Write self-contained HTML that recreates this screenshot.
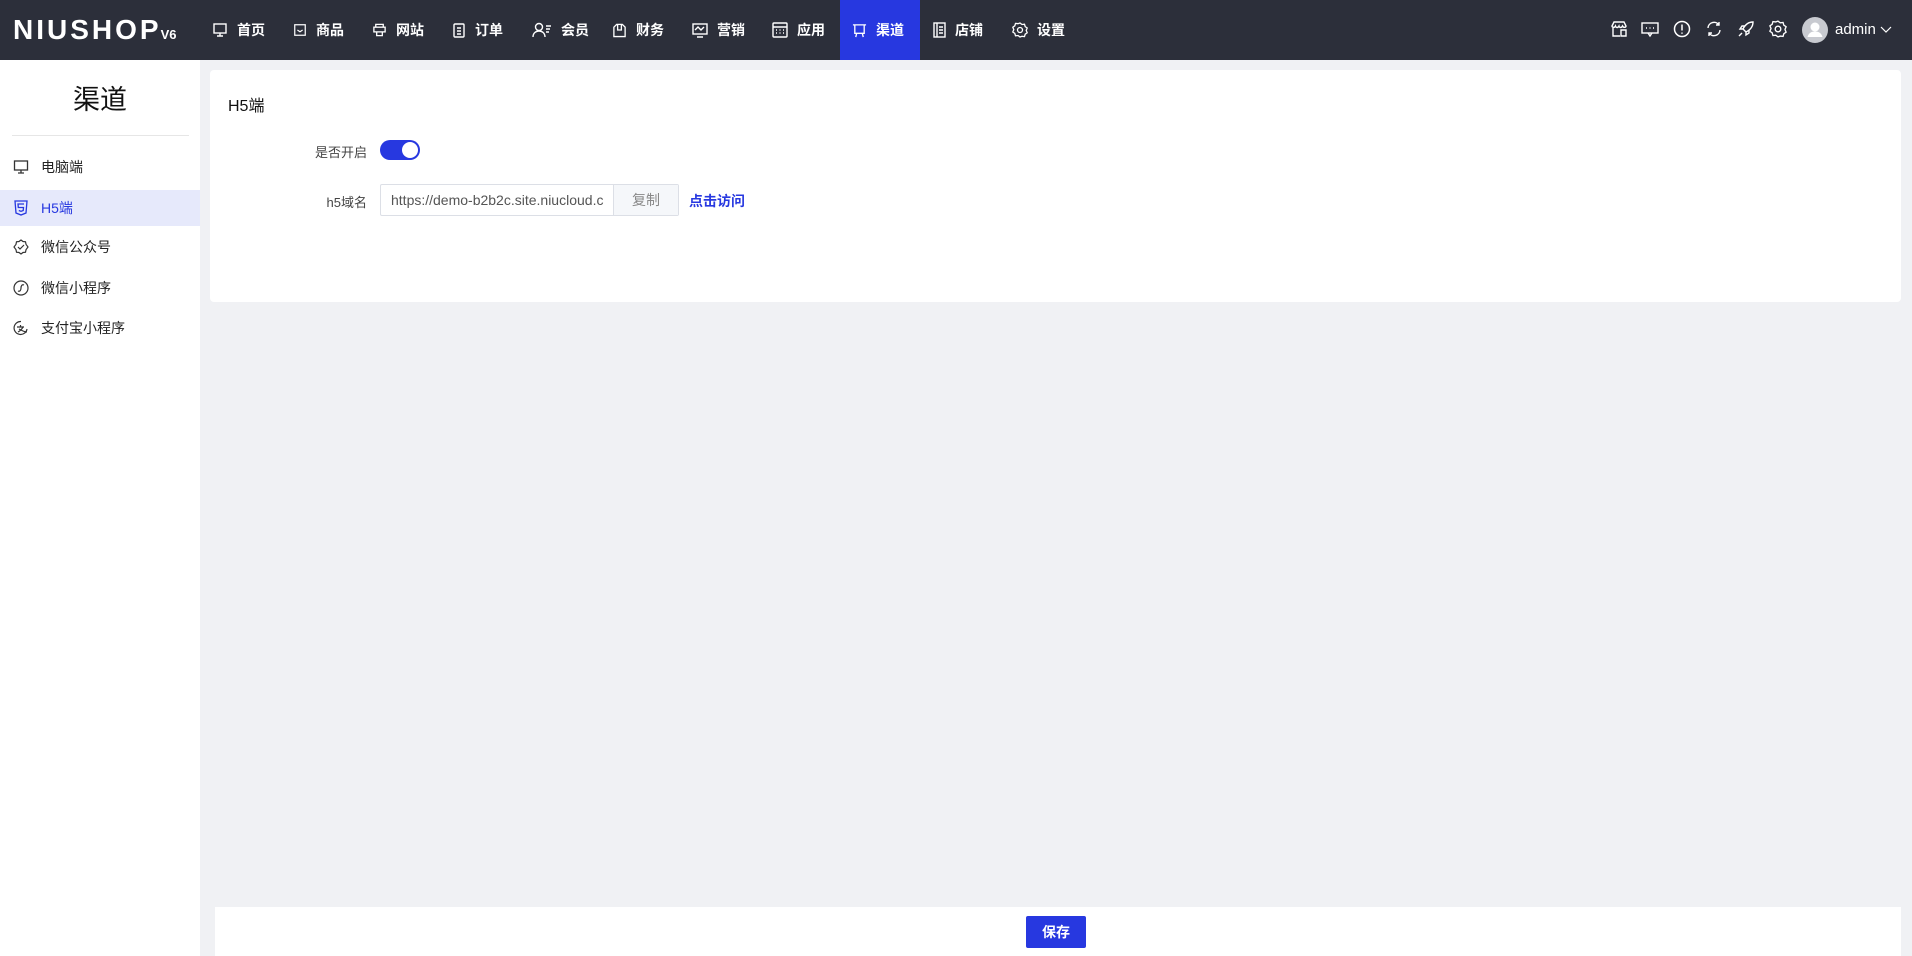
<!DOCTYPE html>
<html><head><meta charset="utf-8"><style>
*{margin:0;padding:0;box-sizing:border-box}
body{width:1912px;height:956px;overflow:hidden;background:#f0f1f4;font-family:"Liberation Sans","Noto Sans CJK SC",sans-serif;position:relative}
.hd{position:absolute;left:0;top:0;width:1912px;height:60px;background:#2c2f3a;color:#fff}
.logo{position:absolute;left:13px;top:14px;font-size:28px;font-weight:bold;letter-spacing:3px;font-family:"Liberation Sans",sans-serif}
.logo small{font-size:13px;letter-spacing:0;margin-left:-1px}
.nav{position:absolute;top:0;height:60px;display:flex;align-items:center;font-size:14px;font-weight:bold}
.nav svg{margin-right:9px}
.act{position:absolute;left:840px;top:0;width:80px;height:60px;background:#2738e0}
.ri{position:absolute;top:20px}
.side{position:absolute;left:0;top:60px;width:200px;height:896px;background:#fff}
.side h1{position:absolute;left:0;width:200px;top:18px;text-align:center;font-size:27px;font-weight:normal;color:#111}
.side .dv{position:absolute;left:12px;top:75px;width:177px;height:1px;background:#e6e6e6}
.it{position:absolute;left:0;width:200px;height:36px;display:flex;align-items:center;font-size:14px;color:#222}
.it svg{margin:0 12px 0 13px}
.it.on{background:#e6e9fb;color:#2738e0}
.card{position:absolute;left:210px;top:70px;width:1691px;height:232px;background:#fff;border-radius:4px}
.lbl{position:absolute;font-size:13px;color:#444;text-align:right;width:120px}
.bar{position:absolute;left:215px;top:907px;width:1686px;height:49px;background:#fff}
.btn{position:absolute;left:1026px;top:916px;width:60px;height:32px;background:#2738e0;color:#fff;border-radius:2px;font-size:14px;font-weight:bold;text-align:center;line-height:32px}
</style></head><body>
<div class="hd">
<div class="logo">NIUSHOP<small>V6</small></div>
<div class="act"></div>
<div class="nav" style="left:212px"><svg width="16" height="16" viewBox="0 0 16 16" fill="none" stroke="#fff" stroke-width="1.4"><rect x="2" y="2" width="12" height="9"/><path d="M8 11v3M5 14h6"/></svg>首页</div>
<div class="nav" style="left:293px"><svg width="14" height="14" viewBox="0 0 16 16" fill="none" stroke="#fff" stroke-width="1.4"><rect x="2" y="2" width="12" height="12"/><path d="M5 8l3 2 3-2"/></svg>商品</div>
<div class="nav" style="left:372px"><svg width="15" height="16" viewBox="0 0 16 16" fill="none" stroke="#fff" stroke-width="1.4"><rect x="2" y="5" width="12" height="5"/><path d="M4 5V2h8v3M5 10v4h6v-4"/></svg>网站</div>
<div class="nav" style="left:452px"><svg width="14" height="16" viewBox="0 0 14 16" fill="none" stroke="#fff" stroke-width="1.4"><rect x="2" y="2" width="10" height="13" rx="1"/><path d="M5 6h4M5 9h4M5 12h4"/></svg>订单</div>
<div class="nav" style="left:532px"><svg width="20" height="16" viewBox="0 0 20 16" fill="none" stroke="#fff" stroke-width="1.4"><circle cx="7" cy="5" r="3.5"/><path d="M1 15c0-4 3-6 6-6s6 2 6 6M14 4h5M14 7h4M14 10h3"/></svg>会员</div>
<div class="nav" style="left:612px"><svg width="15" height="16" viewBox="0 0 16 16" fill="none" stroke="#fff" stroke-width="1.4"><path d="M2 5l3-3h6l3 3v10H2z"/><path d="M6 2v6h4V2"/></svg>财务</div>
<div class="nav" style="left:692px"><svg width="16" height="16" viewBox="0 0 16 16" fill="none" stroke="#fff" stroke-width="1.4"><rect x="1" y="2" width="14" height="10"/><path d="M3 8l3-3 3 3 3-3M5 15h6"/></svg>营销</div>
<div class="nav" style="left:772px"><svg width="16" height="16" viewBox="0 0 16 16" fill="none" stroke="#fff" stroke-width="1.4"><rect x="1" y="1" width="14" height="14" rx="1"/><path d="M1 5h14M4 8h1M7.5 8h1M11 8h1M4 11h1M7.5 11h1M11 11h1"/></svg>应用</div>
<div class="nav" style="left:852px"><svg width="15" height="15" viewBox="0 0 16 16" fill="none" stroke="#fff" stroke-width="1.4"><path d="M1 2h14M3 2v9h10V2M5 11l-1 4M11 11l1 4"/></svg>渠道</div>
<div class="nav" style="left:933px"><svg width="13" height="16" viewBox="0 0 13 16" fill="none" stroke="#fff" stroke-width="1.4"><rect x="1" y="1" width="11" height="14"/><path d="M4 1v14M6 5h4M6 8h4M6 11h4"/></svg>店铺</div>
<div class="nav" style="left:1012px"><svg width="16" height="16" viewBox="0 0 16 16" fill="none" stroke="#fff" stroke-width="1.3"><circle cx="8" cy="8" r="2.5"/><path d="M8 1l2 1.5 2.5-.3.7 2.4 2 1.4-1 2.4 1 2.4-2 1.4-.7 2.4-2.5-.3L8 15l-2-1.5-2.5.3-.7-2.4-2-1.4 1-2.4-1-2.4 2-1.4.7-2.4 2.5.3z"/></svg>设置</div>
<svg class="ri" style="left:1610px" width="18" height="18" viewBox="0 0 18 18" fill="none" stroke="#fff" stroke-width="1.4"><path d="M2 6l2-4h10l2 4v0c0 1.5-2.5 2-3.5 0-1 2-3 2-3.5 0-1 2-3 2-3.5 0C4.5 8 2 7.5 2 6zM3 8v8h7M11 10h5v6h-5z"/></svg>
<svg class="ri" style="left:1641px" width="18" height="18" viewBox="0 0 18 18" fill="none" stroke="#fff" stroke-width="1.4"><rect x="1" y="3" width="16" height="10"/><path d="M7 13l2 3 2-3M5 8h1M8.5 8h1M12 8h1"/></svg>
<svg class="ri" style="left:1673px" width="18" height="18" viewBox="0 0 18 18" fill="none" stroke="#fff" stroke-width="1.5"><circle cx="9" cy="9" r="7.5"/><path d="M9 4.5v6M9 12.5v1.3"/></svg>
<svg class="ri" style="left:1705px" width="18" height="18" viewBox="0 0 18 18" fill="none" stroke="#fff" stroke-width="1.4"><path d="M3 8a6 6 0 0 1 11-3M15 10a6 6 0 0 1-11 3M14 2v3h-3M4 16v-3h3"/></svg>
<svg class="ri" style="left:1737px" width="18" height="18" viewBox="0 0 18 18" fill="none" stroke="#fff" stroke-width="1.4"><path d="M16 2c-5 0-8 3-10 7l3 3c4-2 7-5 7-10zM6 9l-3 0 2-3h3M9 12v3l3-2v-3M5 13l-3 3"/></svg>
<svg class="ri" style="left:1769px" width="18" height="18" viewBox="0 0 16 16" fill="none" stroke="#fff" stroke-width="1.2"><circle cx="8" cy="8" r="2.5"/><path d="M8 1l2 1.5 2.5-.3.7 2.4 2 1.4-1 2.4 1 2.4-2 1.4-.7 2.4-2.5-.3L8 15l-2-1.5-2.5.3-.7-2.4-2-1.4 1-2.4-1-2.4 2-1.4.7-2.4 2.5.3z"/></svg>
<svg style="position:absolute;left:1802px;top:17px" width="26" height="26" viewBox="0 0 26 26"><circle cx="13" cy="13" r="13" fill="#c8cad0"/><circle cx="13" cy="10" r="4.5" fill="#fff"/><path d="M5.5 20c1-4 4-5.5 7.5-5.5s6.5 1.5 7.5 5.5z" fill="#fff"/></svg>
<div style="position:absolute;left:1835px;top:21px;font-size:15px">admin</div>
<svg style="position:absolute;left:1880px;top:24px" width="12" height="10" viewBox="0 0 12 10" fill="none" stroke="#fff" stroke-width="1.2"><path d="M1 3l5 5 5-5"/></svg>
</div>
<div class="side">
<h1>渠道</h1><div class="dv"></div>
<div class="it" style="top:89px"><svg width="16" height="16" viewBox="0 0 16 16" fill="none" stroke="#333" stroke-width="1.3"><rect x="1.5" y="2" width="13" height="9"/><path d="M8 11v3M5 14h6"/></svg>电脑端</div>
<div class="it on" style="top:130px"><svg width="16" height="16" viewBox="0 0 16 16" fill="none" stroke="#2738e0" stroke-width="1.3"><path d="M2 1h12l-1 12-5 2-5-2z"/><path d="M11 4H5l.3 3.5h5.2l-.3 3-2.2.8-2.2-.8"/></svg>H5端</div>
<div class="it" style="top:169px"><svg width="16" height="16" viewBox="0 0 16 16" fill="none" stroke="#333" stroke-width="1.2"><path d="M8 1l2 1.5 2.5.3.5 2.5L15 8l-2 2.7-.5 2.5-2.5.3L8 15l-2-1.5-2.5-.3-.5-2.5L1 8l2-2.7.5-2.5 2.5-.3z"/><path d="M5 8l2 2 4-4"/></svg>微信公众号</div>
<div class="it" style="top:210px"><svg width="16" height="16" viewBox="0 0 16 16" fill="none" stroke="#333" stroke-width="1.2"><circle cx="8" cy="8" r="7"/><path d="M5 11c2 1 3-1 3-3s1-4 3-3"/></svg>微信小程序</div>
<div class="it" style="top:250px"><svg width="16" height="16" viewBox="0 0 16 16" fill="none" stroke="#333" stroke-width="1.2"><path d="M14 9A6.5 6.5 0 1 1 8 1.5"/><path d="M4 7h7M7.5 5v2M5 12c2-1 4-3 5-5M6 9c2 1 5 3 8 3"/></svg>支付宝小程序</div>
</div>
<div class="card">
<div style="position:absolute;left:18px;top:22px;font-size:16px;color:#111">H5端</div>
<div class="lbl" style="left:37px;top:72px">是否开启</div>
<div style="position:absolute;left:170px;top:70px;width:40px;height:20px;border-radius:10px;background:#2738e0"><div style="position:absolute;right:2px;top:2px;width:16px;height:16px;border-radius:50%;background:#fff"></div></div>
<div class="lbl" style="left:37px;top:122px">h5域名</div>
<div style="position:absolute;left:170px;top:114px;width:299px;height:32px;border:1px solid #dcdfe6;border-radius:2px;display:flex;font-size:14px">
<div style="width:232px;padding-left:10px;line-height:30px;color:#555;overflow:hidden;white-space:nowrap">https://demo-b2b2c.site.niucloud.c</div>
<div style="flex:1;background:#f5f7fa;border-left:1px solid #dcdfe6;text-align:center;line-height:30px;color:#888">复制</div></div>
<div style="position:absolute;left:479px;top:121px;font-size:14px;color:#2738e0;font-weight:bold">点击访问</div>
</div>
<div class="bar"></div>
<div class="btn">保存</div>
</body></html>
